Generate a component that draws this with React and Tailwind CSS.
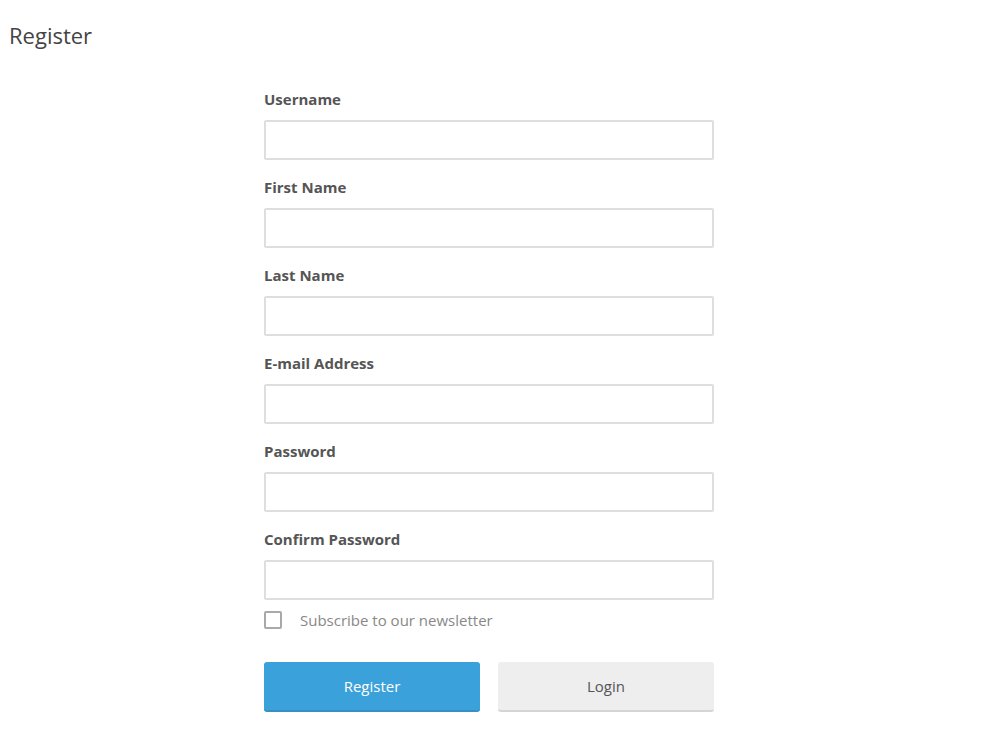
const fields = ['Username', 'First Name', 'Last Name', 'E-mail Address', 'Password', 'Confirm Password'];

const App = () => {
  return (
    <div className="min-h-screen bg-white" style={{ fontFamily: '"Open Sans", "Noto Sans", sans-serif' }}>
      <h1 className="pl-[9px] pt-5 text-[22px] leading-[30px] text-[#444]">Register</h1>

      <form className="ml-[264px] mt-10 w-[450px]" onSubmit={(e) => e.preventDefault()}>
        {fields.map((name, i) => (
          <div key={name} className={i < fields.length - 1 ? 'mb-[18px]' : ''}>
            <label className="mb-3 block text-[15px] font-bold leading-[18px] text-[#555]">{name}</label>
            <input
              type={name.includes('Password') ? 'password' : 'text'}
              className="block h-10 w-full rounded-[2px] border-2 border-[#dedede] bg-white px-3 text-[15px] text-[#555] outline-none"
            />
          </div>
        ))}

        <label className="mt-[11px] flex h-[18px] items-center">
          <span className="h-[18px] w-[18px] rounded-[2px] border-2 border-[#a9a9a9] bg-white" />
          <span className="ml-[18px] text-[15px] leading-5 text-[#888]">Subscribe to our newsletter</span>
        </label>

        <div className="mt-[33px] flex gap-[18px]">
          <button className="h-[50px] w-[216px] rounded-[3px] border-b-2 border-[#3690c4] bg-[#3ba1da] text-[15px] text-white">
            Register
          </button>
          <button className="h-[50px] w-[216px] rounded-[3px] border-b-2 border-[#d5d5d5] bg-[#eeeeee] text-[15px] text-[#555]">
            Login
          </button>
        </div>
      </form>
    </div>
  );
};

export default App;
